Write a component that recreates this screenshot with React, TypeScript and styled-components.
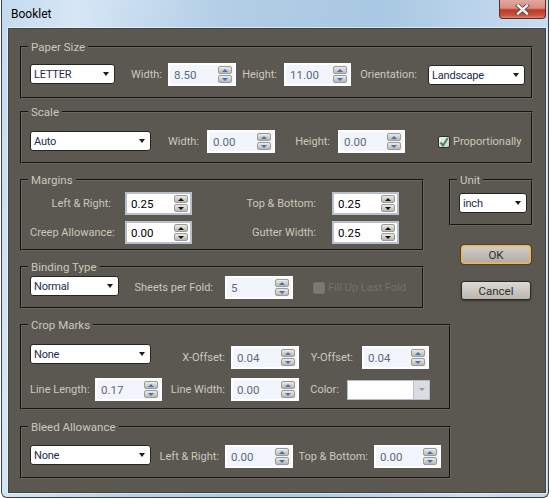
import styled, { createGlobalStyle } from 'styled-components'

const GlobalStyle = createGlobalStyle`
    html, body {
        margin: 0;
        background: #ffffff;
    }
`

const Page = styled.div`
    width: 551px;
    height: 499px;
    overflow: hidden;
    font-family: Roboto, 'Liberation Sans', sans-serif;
    font-size: 11px;
`

const Window = styled.div`
    box-sizing: border-box;
    width: 548px;
    height: 498px;
    margin-left: 1px;
    display: flex;
    flex-direction: column;
    border: 1px solid #3c4248;
    border-top: 0;
    border-radius: 0 0 6px 6px;
    background: linear-gradient(100deg, #c4daee 0%, #d6e6f5 12%, #b3cee6 35%, #a9c8e3 60%, #c9def1 88%, #bcd5ea 100%);
`

const TitleBar = styled.div`
    height: 28px;
    flex: none;
    display: flex;
    justify-content: space-between;
    align-items: flex-start;
    padding: 0 2px 0 9px;
`

const Title = styled.span`
    margin-top: 6px;
    font-size: 12px;
    line-height: 16px;
    color: #000;
`

const CloseButton = styled.div`
    box-sizing: border-box;
    width: 47px;
    height: 19px;
    display: flex;
    align-items: center;
    justify-content: center;
    border: 1px solid #5e2a26;
    border-top: 0;
    border-radius: 0 0 4px 4px;
    background: linear-gradient(#e3a79e 0%, #d88c80 45%, #bd3a28 55%, #c9523c 85%, #d98a72 100%);
`

const Panel = styled.div`
    box-sizing: border-box;
    flex: 1;
    margin: 0 2px 4px 6px;
    padding: 11px 12px 0 11px;
    display: flex;
    flex-direction: column;
    background: #5a5850;
    border: 1px solid #45443e;
    box-shadow: 0 0 0 1px rgba(255, 255, 255, 0.45);
`

const Group = styled.fieldset<{ $w?: number; $h: number; $top: number; $pad: number }>`
    box-sizing: border-box;
    width: ${(p) => (p.$w ? p.$w + 'px' : 'auto')};
    height: ${(p) => p.$h}px;
    margin: ${(p) => p.$top}px 0 0;
    min-width: 0;
    padding: ${(p) => p.$pad}px 0 0 8px;
    border: 2px groove #69675e;
    color: #cbc8ba;
`

const Legend = styled.legend`
    height: 14px;
    line-height: 14px;
    margin-left: -2px;
    padding: 0 3px;
    color: #cbc8ba;
    font-size: 11.5px;
`

const Split = styled.div`
    display: flex;
    justify-content: space-between;
`

const Column = styled.div`
    display: flex;
    flex-direction: column;
`

const Row = styled.div<{ $top?: number }>`
    display: flex;
    align-items: center;
    height: 23px;
    margin-top: ${(p) => p.$top ?? 0}px;
`

const Label = styled.span<{ $w: number; $pad: number }>`
    box-sizing: border-box;
    flex: none;
    width: ${(p) => p.$w}px;
    padding-right: ${(p) => p.$pad}px;
    text-align: right;
    white-space: nowrap;
    color: #cbc8ba;
`

const SelectBox = styled.div<{ $w: number; $top?: number }>`
    box-sizing: border-box;
    flex: none;
    width: ${(p) => p.$w}px;
    height: 20px;
    align-self: flex-start;
    margin-top: ${(p) => p.$top ?? 0}px;
    padding: 0 5px 0 3px;
    display: flex;
    align-items: center;
    justify-content: space-between;
    background: #ffffff;
    border: 1px solid #26251f;
    border-radius: 3px;
    color: #1d2b4d;
    font-size: 11px;
    letter-spacing: -0.2px;
`

const DropArrow = styled.i`
    width: 0;
    height: 0;
    border-left: 3.5px solid transparent;
    border-right: 3.5px solid transparent;
    border-top: 4px solid #1c1c1c;
`

const Spin = styled.div<{ $w?: number; $active?: boolean }>`
    box-sizing: border-box;
    flex: none;
    width: ${(p) => p.$w ?? 67}px;
    height: 23px;
    padding: 0 2px 0 4px;
    display: flex;
    align-items: center;
    justify-content: space-between;
    background: ${(p) => (p.$active ? '#ffffff' : '#f2f6fc')};
    border: 2px solid ${(p) => (p.$active ? '#b9c0cd' : '#ffffff')};
    color: ${(p) => (p.$active ? '#000000' : '#5a6880')};
    font-size: 11.5px;
`

const SpinButtons = styled.div`
    display: flex;
    flex-direction: column;
    gap: 1px;
`

const SpinButton = styled.div<{ $active?: boolean; $down?: boolean }>`
    box-sizing: border-box;
    width: 14px;
    height: 8px;
    display: flex;
    align-items: center;
    justify-content: center;
    background: linear-gradient(#ecebe7, #b9b8b1);
    border: 1px solid #9d9c94;
    border-radius: 2px;

    &::after {
        content: '';
        width: 0;
        height: 0;
        border-left: 3px solid transparent;
        border-right: 3px solid transparent;
        ${(p) => (p.$down ? 'border-top' : 'border-bottom')}: 3px solid ${(p) => (p.$active ? '#111111' : '#3a76c4')};
    }
`

const CheckBox = styled.div<{ $off?: boolean }>`
    box-sizing: border-box;
    flex: none;
    width: 12px;
    height: 12px;
    display: flex;
    align-items: center;
    justify-content: center;
    border-radius: 2px;
    background: ${(p) => (p.$off ? '#7b7973' : 'linear-gradient(135deg, #f2f2ee, #cfcfc8)')};
    border: 1px solid ${(p) => (p.$off ? '#74726b' : '#2f2f2a')};
`

const CheckRow = styled.div<{ $left: number }>`
    display: flex;
    align-items: center;
    gap: 3px;
    margin-left: ${(p) => p.$left}px;
`

const CheckText = styled.span<{ $off?: boolean }>`
    white-space: nowrap;
    color: ${(p) => (p.$off ? '#74726a' : '#cbc8ba')};
`

const ColorBox = styled.div`
    box-sizing: border-box;
    flex: none;
    width: 83px;
    height: 20px;
    display: flex;
    justify-content: flex-end;
    background: #ffffff;
    border: 1px solid #b4bccb;
`

const ColorArrow = styled.div`
    width: 15px;
    display: flex;
    align-items: center;
    justify-content: center;
    background: #d9dce1;
    border-left: 1px solid #bcc0c6;

    &::after {
        content: '';
        width: 0;
        height: 0;
        border-left: 3px solid transparent;
        border-right: 3px solid transparent;
        border-top: 3px solid #9a9a9a;
    }
`

const Action = styled.div<{ $primary?: boolean; $top: number }>`
    box-sizing: border-box;
    width: 70px;
    height: 19px;
    margin: ${(p) => p.$top}px 0 0 12px;
    display: flex;
    align-items: center;
    justify-content: center;
    border-radius: 3px;
    color: #2f2f2b;
    font-size: 11.5px;
    background: ${(p) => (p.$primary ? 'linear-gradient(#d0cec7, #aeaca5)' : 'linear-gradient(#dbd9d3, #b9b7b0)')};
    border: 1px solid ${(p) => (p.$primary ? '#f2b650' : '#2b2a26')};
    box-shadow: ${(p) => (p.$primary ? '0 0 0 1px #4a4334, inset 0 0 0 0.5px #f2b650' : '0 1px 2px rgba(0, 0, 0, 0.4)')};
`

const SpinField = ({ value, w, active }: { value: string; w?: number; active?: boolean }) => (
    <Spin $w={w} $active={active}>
        <span>{value}</span>
        <SpinButtons>
            <SpinButton $active={active} />
            <SpinButton $active={active} $down />
        </SpinButtons>
    </Spin>
)

const Select = ({ value, w, top }: { value: string; w: number; top?: number }) => (
    <SelectBox $w={w} $top={top}>
        <span>{value}</span>
        <DropArrow />
    </SelectBox>
)

export default function App() {
    return (
        <Page>
            <GlobalStyle />
            <Window>
                <TitleBar>
                    <Title>Booklet</Title>
                    <CloseButton>
                        <svg width="15" height="11" viewBox="0 0 15 11">
                            <path d="M3 1.5 L12 9.5 M12 1.5 L3 9.5" stroke="#4b4b4b" strokeWidth="4" strokeLinecap="square" />
                            <path d="M3 1.5 L12 9.5 M12 1.5 L3 9.5" stroke="#f4f4f4" strokeWidth="2.4" strokeLinecap="square" />
                        </svg>
                    </CloseButton>
                </TitleBar>
                <Panel>
                    <Group $h={59} $top={0} $pad={9}>
                        <Legend>Paper Size</Legend>
                        <Row>
                            <Select value="LETTER" w={85} top={1} />
                            <Label $w={53} $pad={6}>Width:</Label>
                            <SpinField value="8.50" w={68} />
                            <Label $w={48} $pad={7}>Height:</Label>
                            <SpinField value="11.00" />
                            <Label $w={77} $pad={11}>Orientation:</Label>
                            <Select value="Landscape" w={97} top={2} />
                        </Row>
                    </Group>
                    <Group $h={59} $top={6} $pad={11}>
                        <Legend>Scale</Legend>
                        <Row>
                            <Select value="Auto" w={121} top={1} />
                            <Label $w={56} $pad={8}>Width:</Label>
                            <SpinField value="0.00" w={68} />
                            <Label $w={63} $pad={8}>Height:</Label>
                            <SpinField value="0.00" />
                            <CheckRow $left={33}>
                                <CheckBox>
                                    <svg width="10" height="10" viewBox="0 0 10 10">
                                        <path d="M1.5 5.5 L4 8.5 L8.8 1" fill="none" stroke="#3f8a55" strokeWidth="2" />
                                    </svg>
                                </CheckBox>
                                <CheckText>Proportionally</CheckText>
                            </CheckRow>
                        </Row>
                    </Group>
                    <Split>
                        <Column>
                            <Group $w={404} $h={78} $top={9} $pad={5}>
                                <Legend>Margins</Legend>
                                <Row>
                                    <Label $w={95} $pad={14}>Left &amp; Right:</Label>
                                    <SpinField value="0.25" active />
                                    <Label $w={140} $pad={16}>Top &amp; Bottom:</Label>
                                    <SpinField value="0.25" active />
                                </Row>
                                <Row $top={6}>
                                    <Label $w={95} $pad={13}>Creep Allowance:</Label>
                                    <SpinField value="0.00" active />
                                    <Label $w={140} $pad={16}>Gutter Width:</Label>
                                    <SpinField value="0.25" active />
                                </Row>
                            </Group>
                            <Group $w={404} $h={49} $top={9} $pad={2}>
                                <Legend>Binding Type</Legend>
                                <Row>
                                    <Select value="Normal" w={89} />
                                    <Label $w={106} $pad={12}>Sheets per Fold:</Label>
                                    <SpinField value="5" w={68} />
                                    <CheckRow $left={20}>
                                        <CheckBox $off />
                                        <CheckText $off>Fill Up Last Fold</CheckText>
                                    </CheckRow>
                                </Row>
                            </Group>
                        </Column>
                        <Column>
                            <Group $w={84} $h={53} $top={9} $pad={6}>
                                <Legend>Unit</Legend>
                                <Select value="inch" w={68} />
                            </Group>
                            <Action $primary $top={19}>OK</Action>
                            <Action $top={17}>Cancel</Action>
                        </Column>
                    </Split>
                    <Group $w={431} $h={92} $top={9} $pad={14}>
                        <Legend>Crop Marks</Legend>
                        <Row>
                            <Select value="None" w={121} top={-2} />
                            <Label $w={80} $pad={6}>X-Offset:</Label>
                            <SpinField value="0.04" w={68} />
                            <Label $w={63} $pad={9}>Y-Offset:</Label>
                            <SpinField value="0.04" />
                        </Row>
                        <Row $top={9}>
                            <Label $w={65} $pad={8}>Line Length:</Label>
                            <SpinField value="0.17" />
                            <Label $w={69} $pad={6}>Line Width:</Label>
                            <SpinField value="0.00" w={68} />
                            <Label $w={48} $pad={8}>Color:</Label>
                            <ColorBox>
                                <ColorArrow />
                            </ColorBox>
                        </Row>
                    </Group>
                    <Group $w={431} $h={59} $top={10} $pad={11}>
                        <Legend>Bleed Allowance</Legend>
                        <Row>
                            <Select value="None" w={121} />
                            <Label $w={74} $pad={6}>Left &amp; Right:</Label>
                            <SpinField value="0.00" w={68} />
                            <Label $w={81} $pad={6}>Top &amp; Bottom:</Label>
                            <SpinField value="0.00" />
                        </Row>
                    </Group>
                </Panel>
            </Window>
        </Page>
    )
}
